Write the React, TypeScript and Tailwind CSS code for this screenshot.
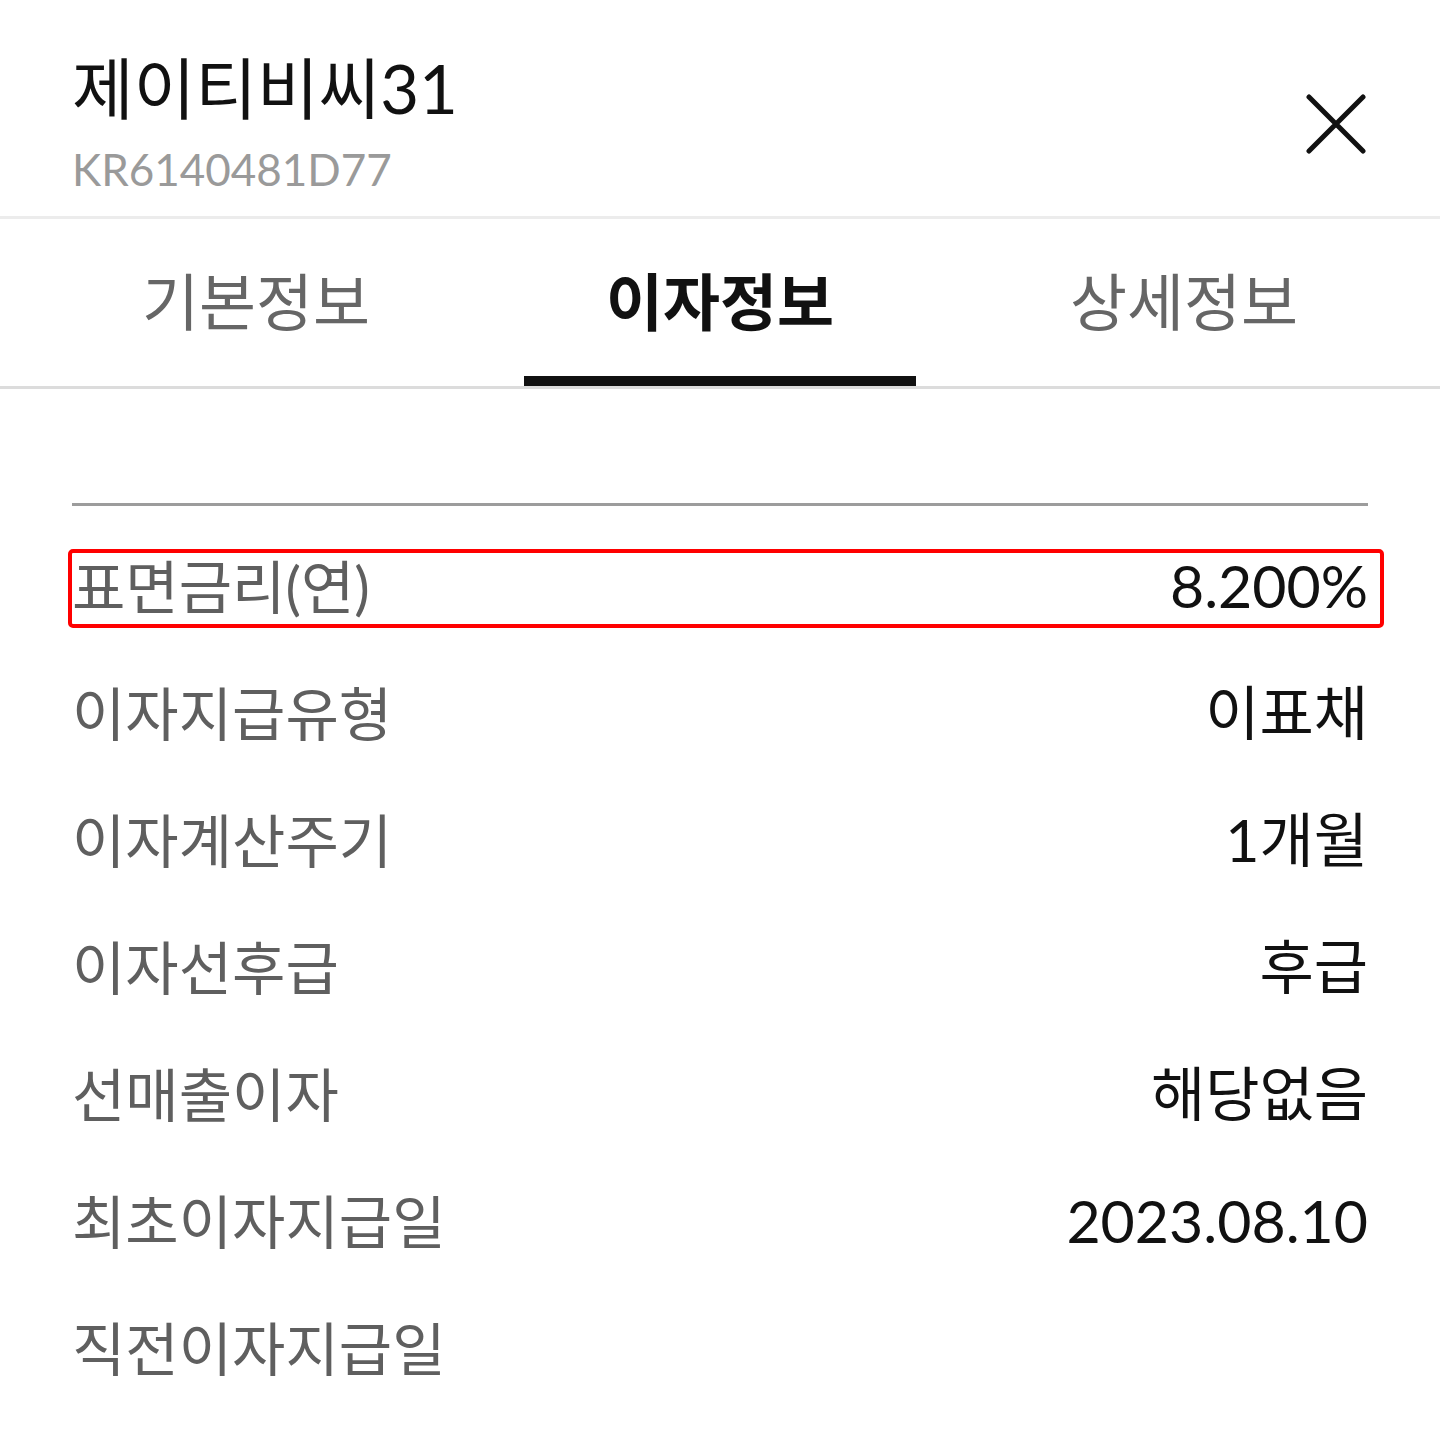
const rows: { label: string; value: string }[] = [
  { label: '표면금리(연)', value: '8.200%' },
  { label: '이자지급유형', value: '이표채' },
  { label: '이자계산주기', value: '1개월' },
  { label: '이자선후급', value: '후급' },
  { label: '선매출이자', value: '해당없음' },
  { label: '최초이자지급일', value: '2023.08.10' },
  { label: '직전이자지급일', value: '' },
];

const tabs = ['기본정보', '이자정보', '상세정보'];

function CloseIcon() {
  return (
    <svg width="60" height="60" viewBox="0 0 60 60" fill="none">
      <path d="M3 3L57 57M57 3L3 57" stroke="#111" strokeWidth="5" strokeLinecap="round" />
    </svg>
  );
}

export default function App() {
  const active = 1;

  return (
    <div
      className="w-[1440px] h-[1440px] bg-white overflow-hidden"
      style={{ fontFamily: 'Lato, "Noto Sans CJK KR", sans-serif' }}
    >
      {/* header */}
      <div className="flex justify-between h-[219px] pl-[72px] pr-[74px] border-b-[3px] border-[#ececec]">
        <div className="flex flex-col pt-[50px]">
          <h1 className="text-[67px] leading-[76px] text-[#111] font-normal">제이티비씨31</h1>
          <p className="mt-[15px] text-[44px] leading-[56px] text-[#9a9a9a]">KR6140481D77</p>
        </div>
        <button className="mt-[94px] self-start">
          <CloseIcon />
        </button>
      </div>

      {/* tabs */}
      <div className="flex px-[24px] h-[170px] border-b-[3px] border-[#dcdcdc]">
        {tabs.map((t, i) => (
          <button key={t} className="relative flex-1 flex items-center justify-center">
            <span
              className={
                i === active
                  ? 'text-[62px] font-bold text-[#111]'
                  : 'text-[62px] font-normal text-[#666]'
              }
            >
              {t}
            </span>
            {i === active && <div className="absolute left-[36px] right-[36px] bottom-0 h-[10px] bg-[#111]" />}
          </button>
        ))}
      </div>

      {/* content */}
      <div className="px-[72px] pt-[114px]">
        <div className="h-[3px] bg-[#9c9c9c]" />
        <div className="pt-[17px]">
          {rows.map((r, i) => (
            <div key={r.label} className="relative flex items-center justify-between h-[127px]">
              <span className="text-[58px] text-[#5f5f5f]">{r.label}</span>
              <span className="text-[59px] text-[#111]">{r.value}</span>
              {i === 0 && (
                <div className="absolute top-[26px] h-[79px] -left-[4px] -right-[16px] border-[4px] border-[#ff0000] rounded-[5px] pointer-events-none" />
              )}
            </div>
          ))}
        </div>
      </div>
    </div>
  );
}
